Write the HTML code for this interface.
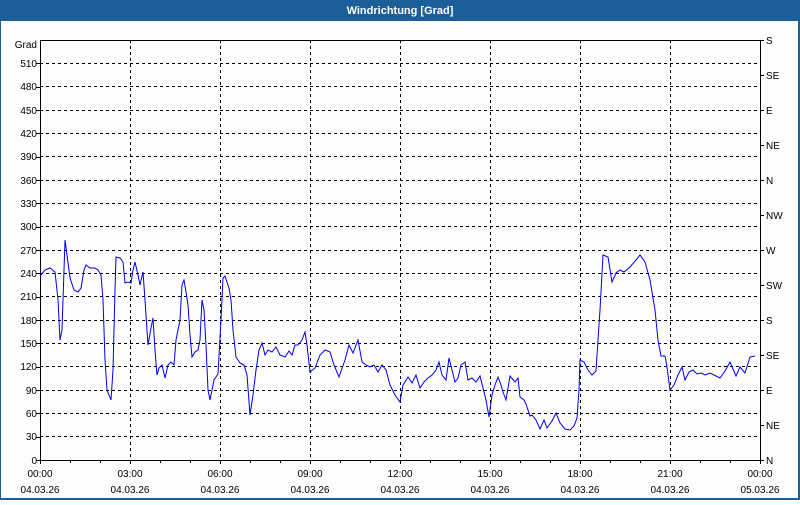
<!DOCTYPE html>
<html><head><style>
html,body{margin:0;padding:0;}
body{width:800px;height:500px;overflow:hidden;background:#fff;font-family:"Liberation Sans",sans-serif;}
</style></head><body>
<svg width="800" height="500" xmlns="http://www.w3.org/2000/svg" font-family="Liberation Sans, sans-serif" font-size="10">
<rect x="0" y="0" width="800" height="500" fill="#1c5e97"/>
<rect x="1" y="21" width="797" height="477" fill="#fcfdfc"/>
<text x="400" y="14" fill="#fff" font-weight="bold" font-size="11" text-anchor="middle">Windrichtung [Grad]</text>
<g stroke="#000" stroke-width="1" stroke-dasharray="3,3" shape-rendering="crispEdges">
<line x1="40" x2="760" y1="63.5" y2="63.5"/><line x1="40" x2="760" y1="86.5" y2="86.5"/><line x1="40" x2="760" y1="110.5" y2="110.5"/><line x1="40" x2="760" y1="133.5" y2="133.5"/><line x1="40" x2="760" y1="156.5" y2="156.5"/><line x1="40" x2="760" y1="180.5" y2="180.5"/><line x1="40" x2="760" y1="203.5" y2="203.5"/><line x1="40" x2="760" y1="226.5" y2="226.5"/><line x1="40" x2="760" y1="250.5" y2="250.5"/><line x1="40" x2="760" y1="273.5" y2="273.5"/><line x1="40" x2="760" y1="296.5" y2="296.5"/><line x1="40" x2="760" y1="320.5" y2="320.5"/><line x1="40" x2="760" y1="343.5" y2="343.5"/><line x1="40" x2="760" y1="366.5" y2="366.5"/><line x1="40" x2="760" y1="390.5" y2="390.5"/><line x1="40" x2="760" y1="413.5" y2="413.5"/><line x1="40" x2="760" y1="436.5" y2="436.5"/>
<line x1="130.5" x2="130.5" y1="40" y2="460"/><line x1="220.5" x2="220.5" y1="40" y2="460"/><line x1="310.5" x2="310.5" y1="40" y2="460"/><line x1="400.5" x2="400.5" y1="40" y2="460"/><line x1="490.5" x2="490.5" y1="40" y2="460"/><line x1="580.5" x2="580.5" y1="40" y2="460"/><line x1="670.5" x2="670.5" y1="40" y2="460"/>
</g>
<g stroke="#000" stroke-width="1" shape-rendering="crispEdges" fill="none">
<rect x="40.5" y="40.5" width="720" height="420"/>
<path d="M40 460.5h-4M40 437.5h-4M40 413.5h-4M40 390.5h-4M40 367.5h-4M40 343.5h-4M40 320.5h-4M40 297.5h-4M40 273.5h-4M40 250.5h-4M40 227.5h-4M40 203.5h-4M40 180.5h-4M40 157.5h-4M40 133.5h-4M40 110.5h-4M40 87.5h-4M40 63.5h-4"/>
<path d="M760 40.5h4M760 75.5h4M760 110.5h4M760 145.5h4M760 180.5h4M760 215.5h4M760 250.5h4M760 285.5h4M760 320.5h4M760 355.5h4M760 390.5h4M760 425.5h4M760 460.5h4"/>
<path d="M40.5 460v4M70.5 460v3M100.5 460v3M130.5 460v4M160.5 460v3M190.5 460v3M220.5 460v4M250.5 460v3M280.5 460v3M310.5 460v4M340.5 460v3M370.5 460v3M400.5 460v4M430.5 460v3M460.5 460v3M490.5 460v4M520.5 460v3M550.5 460v3M580.5 460v4M610.5 460v3M640.5 460v3M670.5 460v4M700.5 460v3M730.5 460v3M760.5 460v4"/>
</g>
<g fill="#000" text-anchor="end">
<text x="37" y="48">Grad</text>
<text x="37" y="67">510</text><text x="37" y="90">480</text><text x="37" y="114">450</text><text x="37" y="137">420</text><text x="37" y="160">390</text><text x="37" y="184">360</text><text x="37" y="207">330</text><text x="37" y="230">300</text><text x="37" y="254">270</text><text x="37" y="277">240</text><text x="37" y="300">210</text><text x="37" y="324">180</text><text x="37" y="347">150</text><text x="37" y="370">120</text><text x="37" y="394">90</text><text x="37" y="417">60</text><text x="37" y="440">30</text><text x="37" y="464">0</text>
</g>
<g fill="#000">
<text x="766" y="44">S</text><text x="766" y="79">SE</text><text x="766" y="114">E</text><text x="766" y="149">NE</text><text x="766" y="184">N</text><text x="766" y="219">NW</text><text x="766" y="254">W</text><text x="766" y="289">SW</text><text x="766" y="324">S</text><text x="766" y="359">SE</text><text x="766" y="394">E</text><text x="766" y="429">NE</text><text x="766" y="464">N</text>
</g>
<g fill="#000" text-anchor="middle">
<text x="40" y="477">00:00</text><text x="130" y="477">03:00</text><text x="220" y="477">06:00</text><text x="310" y="477">09:00</text><text x="400" y="477">12:00</text><text x="490" y="477">15:00</text><text x="580" y="477">18:00</text><text x="670" y="477">21:00</text><text x="760" y="477">00:00</text>
<text x="40" y="493">04.03.26</text><text x="130" y="493">04.03.26</text><text x="220" y="493">04.03.26</text><text x="310" y="493">04.03.26</text><text x="400" y="493">04.03.26</text><text x="490" y="493">04.03.26</text><text x="580" y="493">04.03.26</text><text x="670" y="493">04.03.26</text><text x="760" y="493">05.03.26</text>
</g>
<polyline fill="none" stroke="#0000ee" stroke-width="1" points="40,276 45,270 50,268 55,272 58,300 60,340 62,330 65,240 67,255 70,278 74,290 78,292 81,288 84,270 86,265 90,268 95,268 98,270 101,275 103,300 105,360 107,390 109,395 111,400 113,370 115,290 116,257 120,258 123,262 125,283 128,282 131,283 133,270 135,262 138,275 140,285 143,272 145,300 148,345 151,328 153,318 155,350 157,375 159,368 162,365 165,378 168,365 171,362 174,365 176,340 180,320 182,285 184,280 186,292 188,305 190,335 192,357 195,352 198,350 200,340 202,300 204,310 206,345 208,390 210,400 212,390 214,380 218,374 221,320 223,278 225,276 229,288 231,300 233,330 236,357 240,363 244,365 247,375 250,415 253,395 256,370 259,350 262,343 265,355 268,350 272,352 276,347 280,355 285,357 289,351 292,355 295,345 298,345 302,340 305,332 307,345 310,372 315,368 320,355 325,350 330,352 334,365 339,377 345,360 349,345 353,353 358,340 362,362 366,365 370,367 374,365 378,372 382,365 386,370 390,385 395,395 400,402 403,385 408,377 412,383 416,375 420,388 424,382 428,378 432,375 436,370 439,362 442,375 446,380 449,358 452,370 455,382 458,378 461,365 465,362 468,380 472,378 476,382 480,376 483,388 486,400 489,417 492,395 495,385 498,377 501,385 503,392 506,400 510,376 515,382 518,378 520,397 524,400 526,404 530,416 532,415 536,420 540,429 544,420 547,428 552,421 556,413 560,423 565,429 570,430 574,426 577,418 579,390 580,360 584,362 588,370 592,375 596,371 598,340 600,310 603,255 608,257 612,282 616,273 620,270 624,272 630,267 636,260 640,255 645,262 650,280 655,310 658,340 661,356 665,356 667,367 670,390 674,385 678,375 682,367 685,380 689,372 693,370 697,374 701,373 705,375 710,373 716,376 720,378 725,371 730,362 736,376 740,367 745,373 750,357 755,356"/>
</svg>
</body></html>
